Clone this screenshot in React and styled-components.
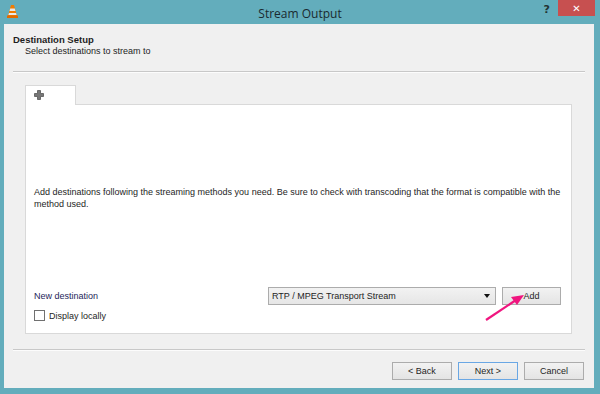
import React from "react";
import styled, { createGlobalStyle } from "styled-components";

const palette = {
  frame: "#63adbc",
  face: "#f0f0f0",
  border: "#acacac",
  line: "#d5d5d5",
  text: "#1e1e1e",
  label: "#1e1e5a",
  close: "#c75050",
};

const GlobalStyle = createGlobalStyle`
  html, body {
    margin: 0;
    padding: 0;
    background: ${palette.frame};
  }
  body {
    font-family: "Liberation Sans", Arial, sans-serif;
    font-size: 9px;
    color: ${palette.text};
  }
`;

const Window = styled.div`
  position: relative;
  width: 600px;
  height: 394px;
  display: flex;
  flex-direction: column;
  background: ${palette.frame};
  overflow: hidden;
`;

const TitleBar = styled.div`
  height: 24px;
  display: flex;
  align-items: flex-start;
  position: relative;
`;

const Cone = styled.svg`
  margin: 5px 0 0 7px;
`;

const Title = styled.div`
  position: absolute;
  left: 0;
  right: 0;
  top: 5px;
  text-align: center;
  font-family: "Open Sans", "Liberation Sans", sans-serif;
  font-size: 12px;
  color: #1a2a30;
`;

const Help = styled.div`
  margin-left: auto;
  margin-top: 3px;
  margin-right: 8px;
  font-family: "DejaVu Sans", sans-serif;
  font-weight: bold;
  font-size: 11px;
  color: #233;
`;

const CloseButton = styled.div`
  width: 37px;
  height: 16px;
  margin-right: 5px;
  background: ${palette.close};
  color: #fff;
  display: flex;
  align-items: center;
  justify-content: center;
  font-family: "DejaVu Sans", sans-serif;
  font-size: 10px;
  font-weight: bold;
`;

const Body = styled.div`
  margin: 0 6px 6px 4px;
  flex: 1;
  background: ${palette.face};
  display: flex;
  flex-direction: column;
  padding: 10px 9px 0 9px;
`;

const Heading = styled.div`
  font-weight: bold;
  font-size: 9.5px;
  line-height: 11px;
`;

const Sub = styled.div`
  margin: 1px 0 0 12px;
  line-height: 11px;
`;

const Separator = styled.div`
  height: 0;
  border-top: 1px solid #c8c8c8;
  border-bottom: 1px solid #fcfcfc;
  margin-top: ${(p) => p.$top}px;
`;

const TabArea = styled.div`
  margin: 12px 13px 0 12px;
  height: 249px;
  display: flex;
  flex-direction: column;
`;

const TabStrip = styled.div`
  display: flex;
  height: 19px;
`;

const Tab = styled.div`
  width: 51px;
  background: #fff;
  border: 1px solid #d9d9d9;
  border-bottom: none;
  position: relative;
  z-index: 1;
  margin-bottom: -1px;
  padding: 4px 0 0 8px;
  box-sizing: border-box;
`;

const Panel = styled.div`
  flex: 1;
  background: #fff;
  border: 1px solid #d9d9d9;
  display: flex;
  flex-direction: column;
  padding: 0 10px 12px 8px;
`;

const Info = styled.p`
  margin: 81px 0 0 0;
  line-height: 12px;
`;

const Spacer = styled.div`
  flex: 1;
`;

const DestRow = styled.div`
  display: flex;
  align-items: center;
  height: 18px;
`;

const Label = styled.div`
  width: 234px;
  color: ${palette.label};
`;

const Combo = styled.div`
  width: 228px;
  height: 18px;
  box-sizing: border-box;
  border: 1px solid ${palette.border};
  background: linear-gradient(#f2f2f2, #e6e6e6);
  display: flex;
  align-items: center;
  padding: 0 5px 0 3px;
`;

const ComboText = styled.span`
  flex: 1;
`;

const Caret = styled.span`
  width: 0;
  height: 0;
  border-left: 3.5px solid transparent;
  border-right: 3.5px solid transparent;
  border-top: 4px solid #111;
`;

const Button = styled.div`
  width: ${(p) => p.$w || 60}px;
  height: 18px;
  box-sizing: border-box;
  border: 1px solid ${(p) => (p.$default ? "#6aa7e4" : palette.border)};
  background: linear-gradient(#f2f2f2, #e4e4e4);
  display: flex;
  align-items: center;
  justify-content: center;
  margin-left: ${(p) => p.$gap || 0}px;
`;

const CheckRow = styled.div`
  display: flex;
  align-items: center;
  margin-top: 5px;
  gap: 4px;
`;

const Check = styled.span`
  width: 11px;
  height: 11px;
  box-sizing: border-box;
  border: 1px solid #707070;
  background: #fff;
`;

const Footer = styled.div`
  display: flex;
  justify-content: flex-end;
  margin: 11px 1px 0 0;
`;

const Arrow = styled.svg`
  position: absolute;
  left: 480px;
  top: 290px;
`;

export default function App() {
  return (
    <>
      <GlobalStyle />
      <Window>
        <TitleBar>
          <Cone width="11" height="13" viewBox="0 0 11 13">
            <path d="M4 0 L7 0 L10 11 L1 11 Z" fill="#f07c00" />
            <path d="M3.2 3.5 L7.8 3.5 L8.5 6 L2.5 6 Z" fill="#e8e8e8" />
            <path d="M2 8 L9 8 L9.6 10 L1.4 10 Z" fill="#eaeaea" />
            <rect x="0" y="10.5" width="11" height="2.5" fill="#e26a00" />
          </Cone>
          <Title>Stream Output</Title>
          <Help>?</Help>
          <CloseButton>✕</CloseButton>
        </TitleBar>
        <Body>
          <Heading>Destination Setup</Heading>
          <Sub>Select destinations to stream to</Sub>
          <Separator $top={14} />
          <TabArea>
            <TabStrip>
              <Tab>
                <svg width="10" height="10" viewBox="0 0 10 10">
                  <path
                    d="M3.5 0.5 H6.5 V3.5 H9.5 V6.5 H6.5 V9.5 H3.5 V6.5 H0.5 V3.5 H3.5 Z"
                    fill="#777"
                    stroke="#555"
                    strokeWidth="0.8"
                  />
                </svg>
              </Tab>
            </TabStrip>
            <Panel>
              <Info>
                Add destinations following the streaming methods you need. Be
                sure to check with transcoding that the format is compatible
                with the method used.
              </Info>
              <Spacer />
              <DestRow>
                <Label>New destination</Label>
                <Combo>
                  <ComboText>RTP / MPEG Transport Stream</ComboText>
                  <Caret />
                </Combo>
                <Button $w={59} $gap={6}>
                  Add
                </Button>
              </DestRow>
              <CheckRow>
                <Check />
                <span>Display locally</span>
              </CheckRow>
            </Panel>
          </TabArea>
          <Separator $top={15} />
          <Footer>
            <Button>&lt; Back</Button>
            <Button $gap={6} $default>
              Next &gt;
            </Button>
            <Button $gap={6}>Cancel</Button>
          </Footer>
        </Body>
        <Arrow width="50" height="36" viewBox="0 0 50 36">
          <line x1="6" y1="30" x2="36" y2="10" stroke="#f0157f" strokeWidth="2.2" />
          <path d="M44 5 L31 7 L37 15 Z" fill="#f0157f" />
        </Arrow>
      </Window>
    </>
  );
}
